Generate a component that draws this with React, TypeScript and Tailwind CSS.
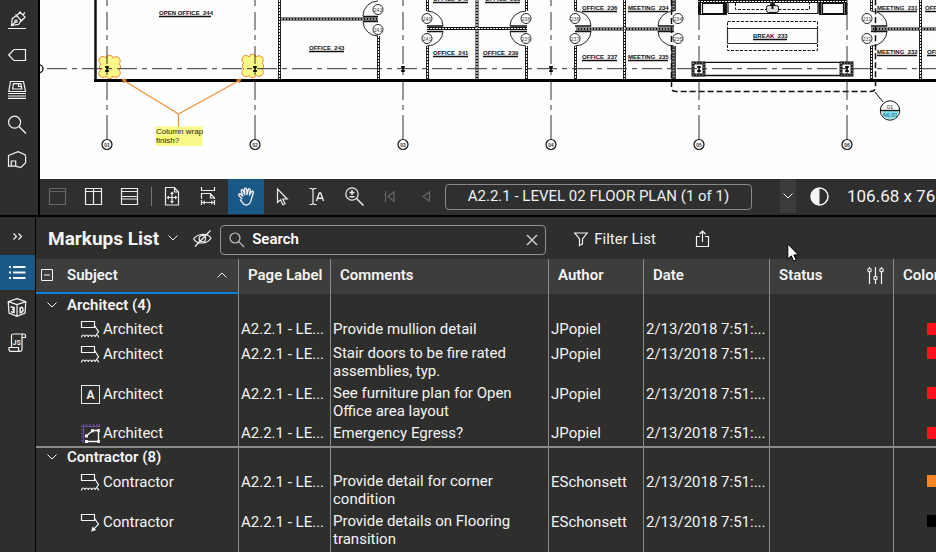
import React, { useState } from "react";
import clsx from "clsx";

/* ------------------ DATA ------------------ */

type MarkupKind = "cloud" | "callout" | "text" | "area";

type Markup = {
  kind: MarkupKind;
  comment: string;
  swatch: string;
};

type Group = { name: string; count: number; author: string; rows: Markup[] };

const GROUPS: Group[] = [
  {
    name: "Architect",
    count: 4,
    author: "JPopiel",
    rows: [
      { kind: "cloud", comment: "Provide mullion detail", swatch: "bg-[#ff0f1b]" },
      { kind: "cloud", comment: "Stair doors to be fire rated assemblies, typ.", swatch: "bg-[#ff0f1b]" },
      { kind: "text", comment: "See furniture plan for Open Office area layout", swatch: "bg-[#ff0f1b]" },
      { kind: "area", comment: "Emergency Egress?", swatch: "bg-[#ff0f1b]" },
    ],
  },
  {
    name: "Contractor",
    count: 8,
    author: "ESchonsett",
    rows: [
      { kind: "cloud", comment: "Provide detail for corner condition", swatch: "bg-[#ff8426]" },
      { kind: "callout", comment: "Provide details on Flooring transition", swatch: "bg-black" },
    ],
  },
];

/* ------------------ ICONS ------------------ */

const Icon = ({ children, className = "size-[19px]", box = "0 0 19 19" }: { children: React.ReactNode; className?: string; box?: string }) => (
  <svg viewBox={box} className={clsx("shrink-0 overflow-visible", className)} fill="none" stroke="currentColor" strokeWidth="1.2" aria-hidden="true">
    {children}
  </svg>
);

const TOOL_ICONS = [
  {
    label: "Tool chest",
    icon: (
      <Icon>
        <path d="M0 18.5h18M3.5 15.5L4.2 8.7 8.6 5.6 13 10.3 10.8 14.3zM3.5 15.5l3.7-3.2M7.5 4.5l6.7 6.8M8.6 5.6l3.5-3.4 5 5-3.9 3.6M11.5 1.5l1.2 1.2M16.8 2.2l-1.6 2.7" />
        <circle cx="8" cy="11.3" r="1.2" />
      </Icon>
    ),
  },
  { label: "Markup", icon: <Icon><path d="M.7 10L6 4.5h11.5v11H6z" /></Icon> },
  {
    label: "Sheets",
    icon: (
      <Icon>
        <path d="M2.5 1.5h13l2 10H.8zM5.5 3.7h7.3l1 5.3H4.6zM10.5 4v2.5h3M0 13.5h18M0 16h18M0 18.4h18" />
      </Icon>
    ),
  },
  {
    label: "Find",
    icon: (
      <Icon>
        <circle cx="6.6" cy="7.2" r="6" />
        <path d="M11 11.5l7 7" />
      </Icon>
    ),
  },
  { label: "Spaces", icon: <Icon><path d="M.5 5.5L10 1.6l7 3 .6 2v6.2l-4.9 4.8-5-1.4H.5zM3.3 16v-5h4.4v5.2" /></Icon> },
];

const Chevron = ({ up = false }: { up?: boolean }) => (
  <Icon className="h-2 w-3" box="0 0 12 8">
    <path d={up ? "M1.5 6.5L6 2l4.5 4.5" : "M1.5 1.5L6 6l4.5-4.5"} strokeWidth="1" />
  </Icon>
);

const KindIcon = ({ kind }: { kind: MarkupKind }) => {
  if (kind === "text") {
    return (
      <span className="flex size-[19px] shrink-0 items-center justify-center border border-[#e8e8e8] text-xs font-semibold">
        A
      </span>
    );
  }
  if (kind === "area") {
    return (
      <Icon>
        <path d="M0 2.5h19M2.5 0v19M5.5 0v2M9 0v2M12.5 0v2M16 0v2M18.5 0v2M0 6h2M0 9.5h2M0 13h2M0 16.5h2" stroke="#6f4ba8" />
        <path d="M5.5 11.8L12 6.5h5.5v11H5.5" strokeWidth="1.4" />
        <path d="M4 10.5h3v3H4zM10 5.3h3v3h-3zM16.3 5h2.5v3h-2.5zM4 16h3v3H4zM16.3 16h2.5v3h-2.5z" fill="currentColor" stroke="none" />
      </Icon>
    );
  }
  return (
    <Icon>
      <path d="M.5 1.5h13v6H.5z" />
      {kind === "cloud" ? (
        <path d="M13.5 5.5l4 6.3-2.7 3.7M.5 17.5q.3-2.5 1.7-2.5t1.7 2q.3-2 1.7-2t1.7 2q.3-2 1.7-2t1.7 2q.3-2 1.7-2t1.7 2q.3-2 1.7-2t1.7 2.500" />
      ) : (
        <>
          <path d="M13.5 5.5l4 5.7-4.2 4.5" />
          <path d="M10.2 18.8l1.2-5.2 3.7 3.3z" fill="currentColor" stroke="none" />
        </>
      )}
    </Icon>
  );
};

/* ------------------ FLOOR PLAN ------------------ */

const GRID = [107, 255, 403, 551, 699, 847];

// [text, left, baseline, underline width]
const ROOMS: [string, number, number, number][] = [
  ["OPEN OFFICE  244", 159, 15, 52],
  ["OFFICE  243", 309, 50, 35],
  ["OFFICE  240", 433, 1, 35],
  ["OFFICE  238", 485, 1, 35],
  ["OFFICE  241", 433, 55, 35],
  ["OFFICE  239", 483, 55, 35],
  ["OFFICE  236", 582, 10, 35],
  ["MEETING  234", 628, 10, 40],
  ["OFFICE  237", 582, 59, 35],
  ["MEETING  235", 628, 59, 40],
  ["BREAK  233", 753, 38, 34],
  ["MEETING  231", 877, 10, 40],
  ["OFFICE", 925, 10, 40],
  ["MEETING  232", 877, 54, 40],
  ["OFFICE", 927, 54, 40],
];

const DOORS: [string, number, number][] = [
  ["242", 378, 9],
  ["243", 378, 29],
  ["240", 427, 18],
  ["241", 427, 38],
  ["238", 526, 18],
  ["239", 526, 38],
  ["236", 575, 18],
  ["237", 575, 38],
  ["234", 678, 18],
  ["235", 678, 38],
  ["231", 867, 18],
  ["232", 867, 38],
];

const WALLS =
  "M279.5 0V80M281 19H378M378.5 36V80M427.5 0V11M427.5 46V80M427 28.5H527M477 0V80M526.5 0V11M526.5 46V80M575.5 0V11M575.5 46V80M576 29H674M624.5 0V80M871.5 0V11M871.5 46V80M871 29H936M920.5 0V80M698 1.5H847";

// scalloped square, bigger bumps on the corners
const CLOUD =
  "M4 10a4 4 0 1 1 5-6a3.600 3.600 0 0 1 7 0a4 4 0 1 1 6 6a3.600 3.600 0 0 1 0 6a4 4 0 1 1-6 6a3.600 3.600 0 0 1-7 0a4 4 0 1 1-5-6a3.600 3.600 0 0 1 0-6z";

const FloorPlan = () => (
  <svg viewBox="40 0 896 179" preserveAspectRatio="xMinYMin slice" className="block h-[179px] w-full bg-[#fefefe]" fill="none" stroke="#111" fontFamily="Liberation Sans, Arial, sans-serif">
    {/* cloud markups sit under the line work */}
    <g fill="#fbf987" stroke="#f08a2c" strokeWidth="1">
      <path d={CLOUD} transform="translate(97 54)" />
      <path d={CLOUD} transform="translate(240 53)" />
    </g>

    {/* walls */}
    <path d={WALLS} strokeWidth="3" />
    <path d={WALLS} stroke="#fff" strokeWidth="1.2" strokeDasharray="2 1" />
    <path d="M673.5 0V11M673.5 46V80" stroke="#444" strokeWidth="5" />
    <path d="M673.5 0V11M673.5 46V80" stroke="#aaa" strokeWidth="2" strokeDasharray="1 2" />
    <path d="M363 16.5H378M363 21.5H378M427 26H443M427 31.5H443M510 26H527M510 31.5H527M575 26H591M575 31.5H591M658 26H674M658 31.5H674M871 26H887M871 31.5H887" strokeWidth="1.5" />
    <path d="M95.5 0V80" strokeWidth="2.5" />
    <path d="M94 80.5H936" strokeWidth="3" stroke="#000" />

    {/* door swings */}
    <path
      d="M378 1A15 15 0 0 0 363 16M363 22A15 15 0 0 0 378 36M427 11A16 15 0 0 1 443 26M443 31A16 15 0 0 1 427 46M526 11A16 15 0 0 0 510 26M510 31A16 15 0 0 0 526 46M575 11A16 15 0 0 1 591 26M591 31A16 15 0 0 1 575 46M674 11A16 15 0 0 0 658 26M658 31A16 15 0 0 0 674 46M871 11A16 15 0 0 1 887 26M887 31A16 15 0 0 1 871 46"
      strokeWidth=".9"
    />

    {/* break room */}
    <path d="M702.5 3.5h21v10h-21zM822.5 3.5h21v10h-21zM728 13.5h90M728 3v10M818 3v10" strokeWidth="1.2" />
    <path d="M699.5 3V14M725.5 3V14M820 3V14M846 3V14" strokeWidth="3" />
    <path d="M698 14.5H727M819 14.5H847" strokeWidth="1.2" />
    <path d="M735.5 3V9.5H809.5V3M727.5 21.5H817.5V50.5H727.5z" strokeDasharray="3 1.5" />
    <path d="M727 28.5H817M727 43.5H817M727.5 28V43M817.5 28V43" stroke="#333" strokeWidth="1.2" />
    <rect x="766.5" y="5.5" width="12" height="7" rx="2" fill="#ddd" />
    <path d="M772.5 3V9M770 4.5h5" strokeWidth="2" />
    <path d="M692 62.3H853M692 75.5H853" strokeWidth="1.3" />
    <path d="M693 63h11v12h-11zM841 63h11v12h-11z" stroke="#222" strokeWidth="3" fill="#fff" />
    <path d="M693 63h11v12h-11zM841 63h11v12h-11z" stroke="#aaa" strokeWidth="1" strokeDasharray="1 2" />

    {/* section outline */}
    <path d="M671.5 0V88Q671.5 91.5 676 91.5H870Q875.5 91.5 875.5 87V0" strokeWidth="1.5" strokeDasharray="6 3" />
    <path d="M875 92L883 102" />
    <circle cx="890" cy="110.5" r="9.7" fill="#fff" />
    <path d="M882 111h16a8 8 0 0 1-16 0z" fill="#84dcee" stroke="none" />
    <path d="M880 110.5H900" strokeWidth="1.3" />
    <g stroke="none" textAnchor="middle" fontSize="6">
      <text x="890" y="109" fill="#333">01</text>
      <text x="890" y="117" fill="#0b5c78">A6.01</text>
    </g>

    {/* grid lines */}
    <circle cx="39" cy="68.7" r="4" fill="#fff" strokeWidth="1.3" />
    <path d="M47 68.7H936" stroke="#333" strokeDasharray="20 5 5 5" strokeWidth="1" />
    {GRID.map((x, i) => (
      <g key={x}>
        <path d={`M${x} 0V6M${x} 12V30M${x} 35V40M${x} 46V64M${x} 70V75M${x} 82V100M${x} 105V110M${x} 115V139`} stroke="#333" />
        <path d={`M${x - 2} 67h4M${x - 2} 71h4M${x} 66v6`} stroke="#000" strokeWidth="1.6" />
        <circle cx={x} cy="144.5" r="5" fill="#fff" strokeWidth="1.2" />
        <text x={x} y="146.5" fontSize="5" fontWeight="bold" textAnchor="middle" fill="#333" stroke="none">
          {`0${i + 1}`}
        </text>
      </g>
    ))}

    {DOORS.map(([num, x, y]) => (
      <g key={num}>
        <circle cx={x} cy={y + 0.5} r="5" fill="#fff" strokeWidth=".9" />
        <text x={x} y={y + 2.5} fontSize="5" textAnchor="middle" fill="#444" stroke="none">
          {num}
        </text>
      </g>
    ))}

    {ROOMS.map(([name, x, y, w]) => (
      <g key={`${name}-${x}`}>
        <text x={x} y={y} fontSize="6" fontWeight="bold" fill="#111" stroke="none" className="whitespace-pre">
          {name}
        </text>
        <path d={`M${x} ${y + 1.5}h${w}`} strokeWidth="1.5" />
      </g>
    ))}

    {/* callout */}
    <path d="M123 80L178.5 114L240 80M178.5 114V127" stroke="#f0913c" strokeWidth="1.2" />
    <path d="M121 78.5l6 1-3 4zM242 78.5l-6 1 3 4z" stroke="none" fill="#d9742a" />
    <path d="M155.5 126.5h47v19.5h-47z" fill="#fbf987" stroke="none" />
    <g fontSize="8" fill="#222" stroke="none">
      <text x="156" y="134">Column wrap</text>
      <text x="156" y="143">finish?</text>
    </g>
  </svg>
);

/* ------------------ VIEW TOOLBAR ------------------ */

const ViewButton = ({ label, active, dim, children }: { label: string; active?: boolean; dim?: boolean; children: React.ReactNode }) => (
  <button
    aria-label={label}
    className={clsx(
      "flex h-[35px] w-9 shrink-0 items-center justify-center",
      active && "bg-[#1a5888]",
      dim ? "text-[#656565]" : "text-[#ececec]"
    )}
  >
    <Icon className="h-[19px] w-[18px]" box="0 0 18 19">
      {children}
    </Icon>
  </button>
);

const ViewToolbar = () => (
  <div className="flex h-9 items-start overflow-hidden bg-[#2f2f2f]">
    <ViewButton label="Single view" dim>
      <path d="M.5 1.5h16v16H.5zM.5 4.5h16" />
    </ViewButton>
    <ViewButton label="Split vertical">
      <path d="M.5 1.5h16v16H.5zM.5 4.5h16M8.5 1.5v16" />
    </ViewButton>
    <ViewButton label="Split horizontal">
      <path d="M.5 1.5h16v16H.5zM.5 4.5h16M.5 9.5h16M.5 12h16" />
    </ViewButton>
    <div className="mx-[3px] mt-2 h-[19px] w-px shrink-0 bg-[#777]" />
    <ViewButton label="Fit page">
      <path d="M1.5.5h9l4 4.5v13h-13zM10.5.5v4.5h4M8 5.5v10M3.5 10.5h9" />
      <path d="M8 4.5l-2 2.5h4zM8 16.5L6 14h4zM2.5 10.5L5 8.5v4zM13.5 10.5L11 8.5v4z" fill="currentColor" stroke="none" />
    </ViewButton>
    <ViewButton label="Fit width">
      <path d="M1.5 0v3.5h13V0M1.5 12V6.5h9l4 4.5v1M10.5 6.5V11h4M2 15.5h12M1.5 13v5M14.5 13v5" />
      <path d="M2 15.5l3-2v4zM14 15.5l-3-2v4z" fill="currentColor" stroke="none" />
    </ViewButton>
    <div className="w-px shrink-0" />
    <ViewButton label="Pan" active>
      <path
        d="M5.3 12L2 8.7C1 7.5 2.5 6.2 3.7 7.2L5.8 9 4.3 4.2C3.9 2.7 5.8 2.1 6.3 3.6L7.8 7.7 7.5 2.2C7.5.7 9.6.7 9.7 2.2L10 7.5 11.3 2.7C11.7 1.3 13.6 1.7 13.3 3.2L12.5 8 14.5 4.8C15.3 3.5 17 4.5 16.3 5.8L14.7 11C14 15 12.5 18 9.3 18 6.5 18 5.3 15.5 3.2 12.5"
        strokeWidth="1.4"
        strokeLinejoin="round"
      />
    </ViewButton>
    <ViewButton label="Select">
      <path d="M4.5 2v13.5l3-2.7 2.3 5 2.2-1-2.2-4.8h4.4z" />
    </ViewButton>
    <ViewButton label="Select text">
      <path d="M.5 1.5h2.2L4 2.5l1.3-1h2.2M.5 17.5h2.2L4 16.5l1.3 1h2.2M4 2.5v14" />
      <path d="M7.5 14l2.8-8h1.4l2.8 8M8.7 11.3h4.6" strokeWidth="1.4" />
    </ViewButton>
    <ViewButton label="Zoom">
      <circle cx="7" cy="7" r="6.2" />
      <path d="M11.5 11.5l7 7M7 3v5M4.5 5.5h5M4.5 9.7h5" strokeWidth="1.5" />
    </ViewButton>
    <ViewButton label="First page" dim>
      <path d="M4.5 4v11M13 4.7v9.6L6.8 9.5z" />
    </ViewButton>
    <ViewButton label="Previous page" dim>
      <path d="M12.5 5v9L6 9.5z" />
    </ViewButton>
    <input
      aria-label="Page"
      defaultValue="A2.2.1 - LEVEL 02 FLOOR PLAN (1 of 1)"
      className="ml-px mt-[5px] h-[26px] w-[307px] shrink-0 rounded-sm border border-[#8a8a8a] bg-transparent pb-0.5 text-center text-[15px] text-[#f0f0f0] outline-none"
    />
    <button aria-label="Page list" className="ml-7 flex h-[34px] w-4 shrink-0 items-center justify-center bg-[#3b3b3b]">
      <Chevron />
    </button>
    <button aria-label="Dim" className="ml-3.5 mt-2 shrink-0">
      <Icon>
        <circle cx="9.5" cy="9.5" r="8.5" strokeWidth="1.5" />
        <path d="M9.5 1a8.5 8.5 0 0 0 0 17z" fill="currentColor" stroke="none" />
      </Icon>
    </button>
    <span className="ml-[18px] mt-[5px] whitespace-nowrap text-[17px] leading-6">106.68 x 76</span>
  </div>
);

/* ------------------ MARKUPS PANEL ------------------ */

const PanelBar = () => (
  <div className="relative flex h-[42px] items-center">
    <h2 className="ml-3 mt-0.5 whitespace-nowrap text-[19px] font-bold">Markups List</h2>
    <button aria-label="List options" className="ml-2">
      <Chevron />
    </button>
    <button aria-label="Hide markups" className="ml-3.5">
      <Icon>
        <path d="M.7 10C4 4.5 14 3.8 18 9 14.5 15.5 4 15.5.7 10zM17.5 1.5L2 17.5" />
        <circle cx="9.3" cy="9.7" r="3.2" />
      </Icon>
    </button>
    <div className="ml-2 mt-1 flex h-[30px] w-[326px] shrink-0 items-center rounded-sm border border-[#929292]">
      <span className="ml-2 flex text-[#c4c4c4]">
        <Icon className="size-4" box="0 0 16 16">
          <circle cx="6" cy="6" r="5" />
          <path d="M9.7 9.7l5.5 5.5" />
        </Icon>
      </span>
      <input
        aria-label="Search markups"
        placeholder="Search"
        className="ml-[7px] min-w-0 flex-1 bg-transparent pb-0.5 text-[15px] font-semibold outline-none placeholder:text-white"
      />
      <button aria-label="Clear search" className="mr-[7px] text-[#c8c8c8]">
        <Icon className="size-3" box="0 0 12 12">
          <path d="M1 1l10 10M11 1L1 11" strokeWidth="1.5" />
        </Icon>
      </button>
    </div>
    <button className="ml-7 mt-0.5 flex items-center gap-1.5 whitespace-nowrap text-[15px]">
      <Icon className="size-3.5" box="0 0 14 14">
        <path d="M.8 1h12.4L8.5 7v5l-3 1.5V7z" />
      </Icon>
      Filter List
    </button>
    <button aria-label="Export" className="ml-[39px] mt-0.5">
      <Icon className="h-[18px] w-4" box="0 0 16 18">
        <path d="M5 6.5H1.5v10h12v-10H10M7.5 12V1M4.5 4l3-3 3 3" />
      </Icon>
    </button>
    {/* pointer */}
    <svg viewBox="0 0 12 19" className="absolute left-[751px] top-[26px] z-10 h-[19px] w-3" aria-hidden="true">
      <path d="M.8 1v15l3.5-3.2 2.4 5.4 2.5-1.1-2.3-5.2h4.5z" fill="#fff" stroke="#000" />
    </svg>
  </div>
);

const HEAD = "h-[35px] border-r border-[#8a8a8a] pb-1 pl-[9px] text-left font-semibold whitespace-nowrap";
const CELL = "border-r border-r-[#8a8a8a] pl-0.5 align-top whitespace-nowrap";

const MarkupRow = ({ row, name, author, last }: { row: Markup; name: string; author: string; last: boolean }) => {
  const line = last && "border-b-2 border-b-[#8a8a8a]";
  const twoLines = row.comment.length > 24;
  const top = twoLines && "pt-px";
  return (
    <tr className={twoLines ? "h-10" : "h-6"}>
      <td className={clsx(CELL, line, top)}>
        <div className="flex items-start gap-[3px] pl-[43px]">
          <KindIcon kind={row.kind} />
          {name}
        </div>
      </td>
      <td className={clsx(CELL, line, top)}>A2.2.1 - LE...</td>
      <td className={clsx("border-r border-r-[#8a8a8a] pl-0.5 pr-6 align-top", line)}>{row.comment}</td>
      <td className={clsx(CELL, line, top)}>{author}</td>
      <td className={clsx(CELL, line, top)}>2/13/2018 7:51:...</td>
      <td className={clsx(CELL, line)} />
      <td className={clsx("pl-[33px] pt-[3px] align-top", line)}>
        <div className={clsx("h-3 w-3.5", row.swatch)} />
      </td>
    </tr>
  );
};

const MarkupTable = () => {
  const [closed, setClosed] = useState<string[]>([]);

  const toggle = (name: string) =>
    setClosed((prev) => (prev.includes(name) ? prev.filter((n) => n !== name) : [...prev, name]));

  return (
    <table className="w-full min-w-[938px] table-fixed border-separate border-spacing-0 text-[15px] leading-[18px]">
      <colgroup>
        <col className="w-[203px]" />
        <col className="w-[92px]" />
        <col className="w-[218px]" />
        <col className="w-[95px]" />
        <col className="w-[126px]" />
        <col className="w-[124px]" />
        <col className="w-[80px]" />
      </colgroup>
      <thead className="bg-[#3d3d3c]">
        <tr>
          <th className="h-[35px] border-r border-b-2 border-r-[#8a8a8a] border-b-[#0a80d8] pb-0.5 text-left font-semibold">
            <div className="flex items-center pl-[5px]">
              <button aria-label="Collapse all" className="flex">
                <Icon className="size-3" box="0 0 12 12">
                  <path d="M.5.5h11v11H.5zM3 6h6" strokeWidth="1" />
                </Icon>
              </button>
              <span className="ml-3.5 flex-1">Subject</span>
              <span className="mr-2.5">
                <Chevron up />
              </span>
            </div>
          </th>
          <th className={HEAD}>Page Label</th>
          <th className={HEAD}>Comments</th>
          <th className={HEAD}>Author</th>
          <th className={HEAD}>Date</th>
          <th className={HEAD}>
            <div className="flex items-center justify-between pr-2">
              Status
              <button aria-label="Manage status" className="flex">
                <Icon className="size-[18px]" box="0 0 18 18">
                  <path d="M2.5 1v1.5M2.5 6v12M8.5 1v9M8.5 14v4M14.5 1v1.5M14.5 6v12" />
                  <circle cx="2.5" cy="4.2" r="1.7" />
                  <circle cx="8.5" cy="12" r="1.7" />
                  <circle cx="14.5" cy="4.2" r="1.7" />
                </Icon>
              </button>
            </div>
          </th>
          <th className="pb-1 pl-[9px] text-left font-semibold">Color</th>
        </tr>
      </thead>
      {GROUPS.map((g, gi) => (
        <tbody key={g.name}>
          <tr className={gi === 0 ? "h-[26px]" : "h-6"}>
            <td className={clsx(CELL, gi === 0 && "pt-0.5")}>
              <button onClick={() => toggle(g.name)} className="flex items-center gap-[9px] pl-2 font-semibold">
                <Chevron />
                {g.name} ({g.count})
              </button>
            </td>
            <td className={CELL} />
            <td className={CELL} />
            <td className={CELL} />
            <td className={CELL} />
            <td className={CELL} />
            <td />
          </tr>
          {!closed.includes(g.name) &&
            g.rows.map((row, i) => (
              <MarkupRow
                key={row.comment}
                row={row}
                name={g.name}
                author={g.author}
                last={i === g.rows.length - 1 && gi < GROUPS.length - 1}
              />
            ))}
        </tbody>
      ))}
    </table>
  );
};

const PanelRail = () => (
  <nav className="flex w-9 shrink-0 flex-col border-r border-black">
    <button aria-label="Expand" className="flex h-[38px] items-center justify-center">
      <Icon className="h-2.5 w-3" box="0 0 12 10">
        <path d="M1.5 2.5l3 3-3 3M6.5 2.5l3 3-3 3" />
      </Icon>
    </button>
    <button aria-label="Markups list" className="flex h-[35px] items-center justify-center bg-[#1a5888]">
      <Icon>
        <path d="M5 4h12.5M5 9.5h12.5M5 15h12.5" strokeWidth="1.8" />
        <path d="M1 3h2v2H1zM1 8.5h2v2H1zM1 14h2v2H1z" fill="currentColor" stroke="none" />
      </Icon>
    </button>
    <button aria-label="3D model" className="flex h-[35px] items-center justify-center">
      <Icon>
        <path d="M9 .6l8.8 3-.8 11.5-8 3.3-8-3.3L.2 3.6zM.2 3.6L9 6.5l8.8-2.9M9 6.5v11.9" />
        <path d="M2.5 8.7l3.5.8v2.3l-2-.5 2 .5v2.7l-3-.8M12.2 9.8v5l1.3-.5c2-1 2-4.5.2-5z" strokeWidth="1.5" />
      </Icon>
    </button>
    <button aria-label="JavaScript" className="flex h-[35px] items-center justify-center">
      <Icon>
        <path d="M3.5 14.5v-12Q3.5 1 5.5 1H16q1.500 0 1.500 1.700v1.800H14M14 4.500v-2Q14 1 16 1M14 4.500v12q0 1.800-1.800 1.800H2.700Q1 18.300 1 16.500v-2h9.500v2q0 1.800 1.700 1.800" />
        <text x="4.500" y="11.500" fontSize="7" fontWeight="bold" fill="currentColor" stroke="none">JS</text>
      </Icon>
    </button>
  </nav>
);

/* ------------------ APP ------------------ */

export default function App() {
  return (
    <div className="flex h-screen flex-col overflow-hidden bg-[#2e2e2d] font-['Roboto',sans-serif] text-[#f4f4f4]">
      <div className="flex shrink-0 border-b-2 border-black">
        <nav className="flex w-10 shrink-0 flex-col items-start border-r-2 border-black pt-0.5">
          {TOOL_ICONS.map((t) => (
            <button key={t.label} aria-label={t.label} className="flex size-[35px] items-center justify-center">
              {t.icon}
            </button>
          ))}
        </nav>
        <main className="min-w-0 flex-1">
          <FloorPlan />
          <ViewToolbar />
        </main>
      </div>

      <div className="flex min-h-0 flex-1">
        <PanelRail />
        <section className="min-w-0 flex-1 overflow-hidden">
          <PanelBar />
          <MarkupTable />
        </section>
      </div>
    </div>
  );
}
